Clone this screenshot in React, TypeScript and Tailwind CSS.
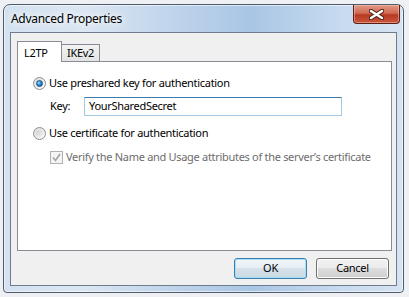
import React from 'react';

const font = { fontFamily: '"Noto Sans", "Segoe UI", sans-serif' };

function Radio({ checked }: { checked?: boolean }) {
  return (
    <span className="flex h-[13px] w-[13px] shrink-0 items-center justify-center rounded-full border border-[#8e8f8f] bg-gradient-to-br from-[#dcdcdc] to-[#fbfbfb]">
      {checked
        ? <span className="h-[7px] w-[7px] rounded-full border border-[#1b4f86] bg-[radial-gradient(circle_at_35%_35%,#a7e0fb_0%,#2e8bd3_45%,#0f4e93_100%)]" />
        : <span className="h-[7px] w-[7px] rounded-full bg-gradient-to-br from-[#cfcfcf] to-[#f3f3f3]" />}
    </span>
  );
}

function WinButton({ label, primary }: { label: string; primary?: boolean }) {
  return (
    <button
      className={
        'flex h-[21px] w-[73px] items-center justify-center rounded-[3px] border text-[11px] tracking-[-0.3px] text-black ' +
        (primary
          ? 'border-[#3c7fb1] bg-[linear-gradient(#f1f6f9_0%,#e6eef4_48%,#d6e2ea_50%,#c9d8e3_100%)] shadow-[inset_0_0_0_1px_#a9dcf5]'
          : 'border-[#707070] bg-[linear-gradient(#f2f2f2_0%,#ebebeb_48%,#dddddd_50%,#cfcfcf_100%)] shadow-[inset_0_0_0_1px_#fcfcfc]')
      }
      style={font}
    >
      {label}
    </button>
  );
}

export default function App() {
  return (
    <div className="relative h-[297px] w-[409px] overflow-hidden bg-[#eef0f3] pl-[3px] pt-[4px] text-[11px] tracking-[-0.3px]" style={font}>
      {/* window */}
      <div className="flex h-[289px] w-[401px] flex-col rounded-t-[7px] rounded-b-[4px] border border-[#4d5b6a] bg-[linear-gradient(90deg,#d3e1f0_0%,#dbe6f2_20%,#bcd2ea_45%,#a9c6e5_62%,#c8dbef_85%,#d6e3f1_100%)] shadow-[inset_0_0_0_1px_rgba(255,255,255,0.6)]">
        {/* title bar */}
        <div className="flex h-[27px] shrink-0 items-start justify-between pl-[7px] pr-[3px]">
          <span className="pt-[6px] text-[12px] leading-[16px] tracking-[-0.3px] text-black [text-shadow:0_0_6px_#fff,0_0_10px_#fff]">Advanced Properties</span>
          <div className="flex h-[19px] w-[47px] items-center justify-center rounded-b-[4px] border border-t-0 border-[#5a1e14] bg-[linear-gradient(#e49a88_0%,#cf6a52_45%,#b73a22_55%,#c9563c_100%)] shadow-[inset_0_0_0_1px_rgba(255,210,200,0.45)]">
            <svg width="15" height="11" viewBox="0 0 15 11">
              <path d="M2 2 L13 9 M13 2 L2 9" stroke="#4a1a12" strokeWidth="4.4" strokeLinecap="round" />
              <path d="M2 2 L13 9 M13 2 L2 9" stroke="#ffffff" strokeWidth="2.6" strokeLinecap="round" />
            </svg>
          </div>
        </div>

        {/* client area */}
        <div className="mx-[6px] mb-[6px] flex flex-1 flex-col border border-[#6d7d8e] bg-[#f0f0f0] px-[6px] pt-[7px]">
          {/* tabs */}
          <div className="flex h-[21px] items-end">
            <div className="relative z-10 -mb-px flex h-[21px] w-[45px] items-start border border-b-0 border-[#898c95] bg-white pl-[6px] pt-[3px] text-black">
              L2TP
            </div>
            <div className="flex h-[17px] w-[38px] items-center border border-b-0 border-l-0 border-[#898c95] bg-[linear-gradient(#f3f3f3,#e3e3e3)] pl-[5px] text-black">
              IKEv2
            </div>
          </div>

          {/* panel */}
          <div className="flex h-[190px] w-[375px] flex-col border border-[#898c95] bg-white pl-[15px] pt-[15px]">
            <div className="flex h-[13px] items-center gap-[3px]">
              <Radio checked />
              <span className="text-black">Use preshared key for authentication</span>
            </div>
            <div className="mt-[7px] flex items-center pl-[17px]">
              <span className="w-[34px] text-black">Key:</span>
              <div className="flex h-[19px] w-[258px] items-center border border-[#a4c9e3] border-t-[#3d7bad] pl-[4px] text-black">
                YourSharedSecret
              </div>
            </div>
            <div className="mt-[11px] flex h-[13px] items-center gap-[3px]">
              <Radio />
              <span className="text-black">Use certificate for authentication</span>
            </div>
            <div className="mt-[11px] flex h-[13px] items-center gap-[3px] pl-[17px]">
              <span className="flex h-[13px] w-[13px] shrink-0 items-center justify-center border border-[#b1b1b1] bg-[#f4f4f4]">
                <svg width="9" height="9" viewBox="0 0 9 9">
                  <path d="M1 4.5 L3.5 7.5 L8 1" stroke="#a3a3a3" strokeWidth="1.6" fill="none" />
                </svg>
              </span>
              <span className="whitespace-nowrap text-[#6d6d6d]">Verify the Name and Usage attributes of the server’s certificate</span>
            </div>
          </div>

          {/* buttons */}
          <div className="mt-[7px] flex justify-end gap-[9px] pr-[1px]">
            <WinButton label="OK" primary />
            <WinButton label="Cancel" />
          </div>
        </div>
      </div>
    </div>
  );
}
